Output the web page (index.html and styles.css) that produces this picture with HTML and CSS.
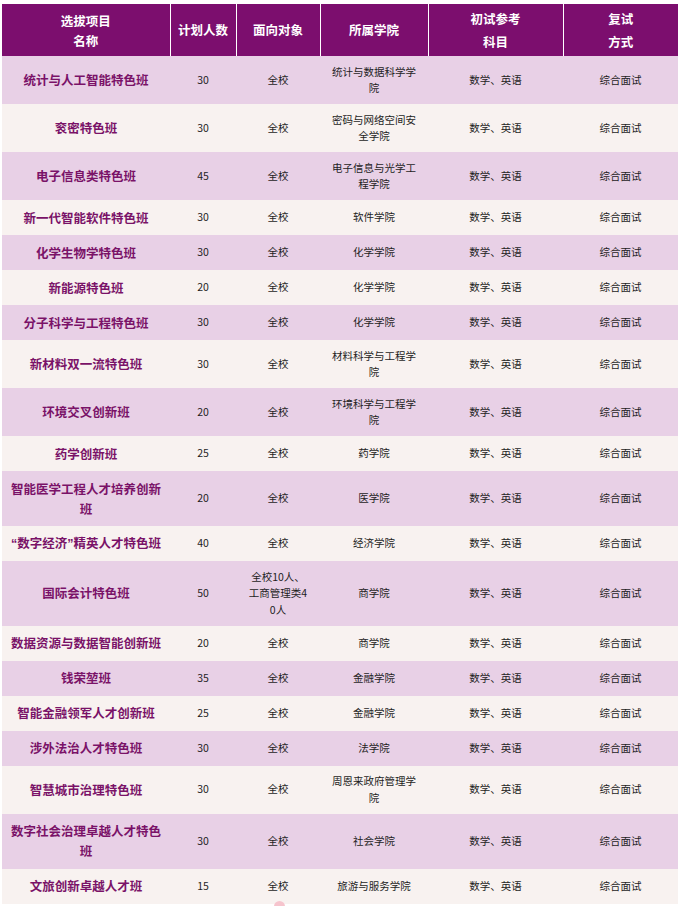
FILE: index.html
```html
<!DOCTYPE html>
<html lang="zh-CN">
<head>
<meta charset="utf-8">
<title>选拔项目</title>
<link rel="stylesheet" href="styles.css">
</head>
<body>
<div class="page">
  <table class="plan">
    <colgroup>
      <col class="c1"><col class="c2"><col class="c3"><col class="c4"><col class="c5"><col class="c6">
    </colgroup>
    <thead>
      <tr>
        <th class="h-name"><span class="hl">选拔项目</span><span class="hl">名称</span></th>
        <th>计划人数</th>
        <th>面向对象</th>
        <th>所属学院</th>
        <th class="h-tall"><span class="hl">初试参考</span><span class="hl">科目</span></th>
        <th class="h-tall"><span class="hl">复试</span><span class="hl">方式</span></th>
      </tr>
    </thead>
    <tbody>
      <tr><td class="name">统计与人工智能特色班</td><td>30</td><td class="target">全校</td><td class="college">统计与数据科学学院</td><td>数学、英语</td><td>综合面试</td></tr>
      <tr><td class="name">衮密特色班</td><td>30</td><td class="target">全校</td><td class="college">密码与网络空间安全学院</td><td>数学、英语</td><td>综合面试</td></tr>
      <tr><td class="name">电子信息类特色班</td><td>45</td><td class="target">全校</td><td class="college">电子信息与光学工程学院</td><td>数学、英语</td><td>综合面试</td></tr>
      <tr><td class="name">新一代智能软件特色班</td><td>30</td><td class="target">全校</td><td class="college">软件学院</td><td>数学、英语</td><td>综合面试</td></tr>
      <tr><td class="name">化学生物学特色班</td><td>30</td><td class="target">全校</td><td class="college">化学学院</td><td>数学、英语</td><td>综合面试</td></tr>
      <tr><td class="name">新能源特色班</td><td>20</td><td class="target">全校</td><td class="college">化学学院</td><td>数学、英语</td><td>综合面试</td></tr>
      <tr><td class="name">分子科学与工程特色班</td><td>30</td><td class="target">全校</td><td class="college">化学学院</td><td>数学、英语</td><td>综合面试</td></tr>
      <tr><td class="name">新材料双一流特色班</td><td>30</td><td class="target">全校</td><td class="college">材料科学与工程学院</td><td>数学、英语</td><td>综合面试</td></tr>
      <tr><td class="name">环境交叉创新班</td><td>20</td><td class="target">全校</td><td class="college">环境科学与工程学院</td><td>数学、英语</td><td>综合面试</td></tr>
      <tr><td class="name">药学创新班</td><td>25</td><td class="target">全校</td><td class="college">药学院</td><td>数学、英语</td><td>综合面试</td></tr>
      <tr><td class="name">智能医学工程人才培养创新班</td><td>20</td><td class="target">全校</td><td class="college">医学院</td><td>数学、英语</td><td>综合面试</td></tr>
      <tr><td class="name nowrap">“数字经济”精英人才特色班</td><td>40</td><td class="target">全校</td><td class="college">经济学院</td><td>数学、英语</td><td>综合面试</td></tr>
      <tr><td class="name">国际会计特色班</td><td>50</td><td class="target">全校10人、工商管理类40人</td><td class="college">商学院</td><td>数学、英语</td><td>综合面试</td></tr>
      <tr><td class="name">数据资源与数据智能创新班</td><td>20</td><td class="target">全校</td><td class="college">商学院</td><td>数学、英语</td><td>综合面试</td></tr>
      <tr><td class="name">钱荣堃班</td><td>35</td><td class="target">全校</td><td class="college">金融学院</td><td>数学、英语</td><td>综合面试</td></tr>
      <tr><td class="name">智能金融领军人才创新班</td><td>25</td><td class="target">全校</td><td class="college">金融学院</td><td>数学、英语</td><td>综合面试</td></tr>
      <tr><td class="name">涉外法治人才特色班</td><td>30</td><td class="target">全校</td><td class="college">法学院</td><td>数学、英语</td><td>综合面试</td></tr>
      <tr><td class="name">智慧城市治理特色班</td><td>30</td><td class="target">全校</td><td class="college">周恩来政府管理学院</td><td>数学、英语</td><td>综合面试</td></tr>
      <tr><td class="name">数字社会治理卓越人才特色班</td><td>30</td><td class="target">全校</td><td class="college">社会学院</td><td>数学、英语</td><td>综合面试</td></tr>
      <tr><td class="name">文旅创新卓越人才班</td><td>15</td><td class="target">全校</td><td class="college">旅游与服务学院</td><td>数学、英语</td><td>综合面试</td></tr>
    </tbody>
  </table>
  <span class="dot"></span>
</div>
</body>
</html>
```

FILE: styles.css
```css
html, body {
  margin: 0;
  padding: 0;
  background: #ffffff;
}

body {
  font-family: "Noto Sans CJK SC", "Noto Sans", sans-serif;
  color: #222222;
}

.page {
  position: relative;
  padding: 4px 1px 0 2px;
  height: 902px;
  overflow: hidden;
}

.plan {
  width: 676px;
  table-layout: fixed;
  border-collapse: collapse;
  border-spacing: 0;
}

.c1 { width: 168px; }
.c2 { width: 66px; }
.c3 { width: 84px; }
.c4 { width: 108px; }
.c5 { width: 135px; }
.c6 { width: 115px; }

.plan th {
  background: #7c0e6e;
  color: #ffffff;
  font-size: 12.5px;
  font-weight: bold;
  line-height: 20px;
  height: 52px;
  padding: 0 6px;
  box-sizing: border-box;
  text-align: center;
  vertical-align: middle;
  border-right: 1px solid #ffffff;
}

.plan th:last-child {
  border-right: none;
}

.plan th .hl {
  display: block;
}

.plan th.h-name {
  padding-top: 2px;
}

.plan th.h-tall {
  line-height: 23px;
}

.plan td {
  font-size: 10.5px;
  line-height: 16.5px;
  padding: 7.5px 10px;
  text-align: center;
  vertical-align: middle;
  word-break: break-all;
  color: #1e1e1e;
}

.plan tbody tr:nth-child(odd) td {
  background: #e8d0e6;
}

.plan tbody tr:nth-child(even) td {
  background: #f8f2f0;
}

.plan td.name {
  font-size: 12.5px;
  line-height: 20px;
  font-weight: bold;
  color: #7a1268;
  padding: 7.5px 8px;
}

.plan td.nowrap {
  white-space: nowrap;
  padding: 7.5px 2px;
  font-family: "Liberation Sans", "Noto Sans CJK SC", sans-serif;
}

.plan td.target {
  padding: 7.5px 12px;
}

.dot {
  position: absolute;
  left: 274px;
  top: 901px;
  width: 11px;
  height: 11px;
  border-radius: 50%;
  background: #f6c4cd;
}
```
